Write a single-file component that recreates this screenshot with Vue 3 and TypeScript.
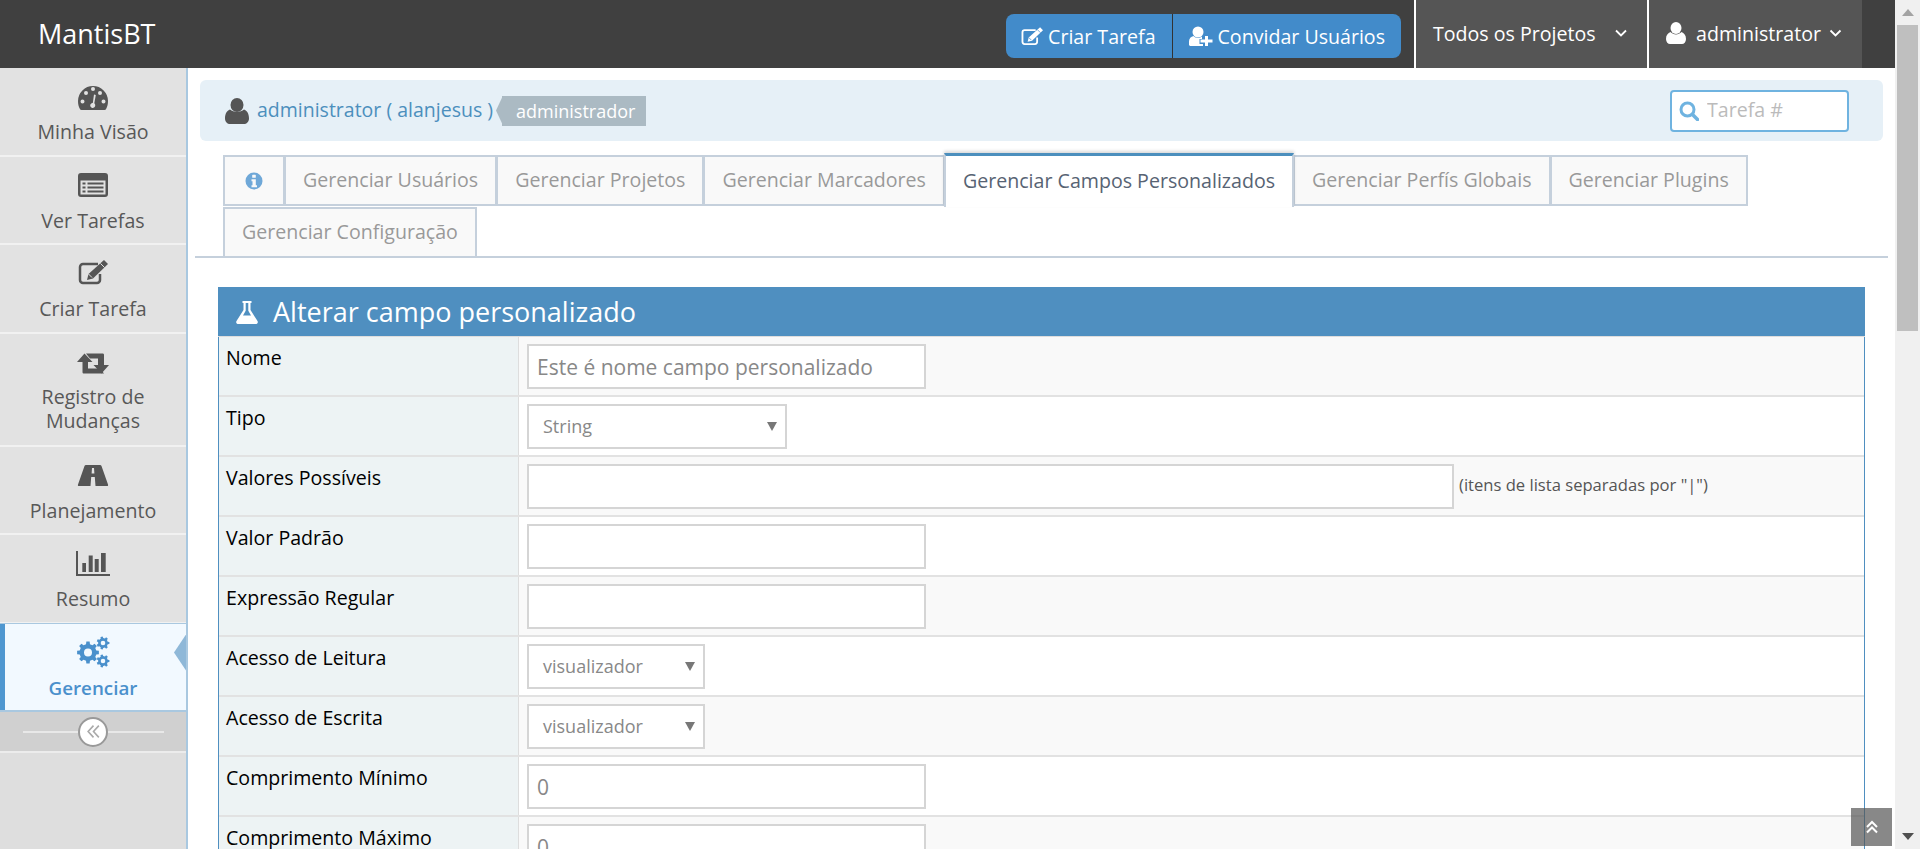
<script setup lang="ts">
interface NavItem { label: string[]; icon: string; active?: boolean }
const nav: NavItem[] = [
  { label: ['Minha Visão'], icon: 'gauge' },
  { label: ['Ver Tarefas'], icon: 'list' },
  { label: ['Criar Tarefa'], icon: 'edit' },
  { label: ['Registro de', 'Mudanças'], icon: 'retweet' },
  { label: ['Planejamento'], icon: 'road' },
  { label: ['Resumo'], icon: 'chart' },
  { label: ['Gerenciar'], icon: 'cogs', active: true },
]
const tabs = [
  'Gerenciar Usuários', 'Gerenciar Projetos', 'Gerenciar Marcadores',
  'Gerenciar Campos Personalizados', 'Gerenciar Perfís Globais',
  'Gerenciar Plugins', 'Gerenciar Configuração',
]
interface Row { label: string; kind: 'input' | 'wide' | 'select'; value?: string; placeholder?: string; width?: string }
const rows: Row[] = [
  { label: 'Nome', kind: 'input', placeholder: 'Este é nome campo personalizado' },
  { label: 'Tipo', kind: 'select', value: 'String', width: '260px' },
  { label: 'Valores Possíveis', kind: 'wide' },
  { label: 'Valor Padrão', kind: 'input' },
  { label: 'Expressão Regular', kind: 'input' },
  { label: 'Acesso de Leitura', kind: 'select', value: 'visualizador', width: '178px' },
  { label: 'Acesso de Escrita', kind: 'select', value: 'visualizador', width: '178px' },
  { label: 'Comprimento Mínimo', kind: 'input', value: '0' },
  { label: 'Comprimento Máximo', kind: 'input', value: '0' },
]

function gear(cx: number, cy: number, R: number, r: number, h: number, n: number): string {
  const w = Math.PI / n
  const pt = (rad: number, a: number) => `${(cx + rad * Math.cos(a)).toFixed(2)} ${(cy + rad * Math.sin(a)).toFixed(2)}`
  let d = ''
  for (let i = 0; i < n; i++) {
    const a = (i * 2 * Math.PI) / n
    d += `${i === 0 ? 'M' : 'L'}${pt(r, a - w * 0.6)}L${pt(R, a - w * 0.38)}L${pt(R, a + w * 0.38)}L${pt(r, a + w * 0.6)}`
  }
  d += `Z M${cx + h} ${cy}a${h} ${h} 0 1 0 ${-2 * h} 0a${h} ${h} 0 1 0 ${2 * h} 0Z`
  return d
}
const cogs = [gear(11, 14.5, 11, 8.5, 4, 8), gear(26, 5, 6.5, 4.9, 2.3, 7), gear(26, 23, 6.5, 4.9, 2.3, 7)].join(' ')
</script>

<template>
  <div class="page">
    <div class="viewport">
      <header class="topbar">
        <div class="brand">MantisBT</div>
        <div class="actions">
          <div class="btn-group">
            <a class="btn">
              <svg viewBox="0 0 30 24" width="22" height="18"><path d="M20 4H5a3 3 0 0 0-3 3v13a3 3 0 0 0 3 3h14a3 3 0 0 0 3-3v-6" fill="none" stroke="#fff" stroke-width="2.500"/><path d="M26 0l4 4-15 14.500-6 1.500 1.500-6z" fill="#fff"/><path d="M22.500 3.500l4 4M10.500 14l3.500 3.500" stroke="#428bca" stroke-width="1"/></svg>
              Criar Tarefa
            </a>
            <a class="btn">
              <svg viewBox="0 0 24 20" width="24" height="20"><circle cx="9" cy="6" r="5.500" fill="#fff"/><path d="M0 19v-3.500C0 12.500 2 10.500 4.500 10c1 1 2.700 2 4.500 2s3-.6 4-1.500V13h-2.500v5H14v2H1z" fill="#fff"/><path d="M16 10h3v3.500h4.500v3H19V20h-3v-3.500h-4.500v-3H16z" fill="#fff"/></svg>
              Convidar Usuários
            </a>
          </div>
          <a class="dropdown projects">
            <span>Todos os Projetos</span>
            <svg class="chev" viewBox="0 0 12 8" width="12" height="8"><path d="M1 1.500l5 5 5-5" fill="none" stroke="#fff" stroke-width="1.800"/></svg>
          </a>
          <a class="dropdown user">
            <svg viewBox="0 0 20 22" width="20" height="22"><ellipse cx="10" cy="6" rx="5.500" ry="6" fill="#fff"/><path d="M0 17c0-4 2-6 4.500-7 1.500 1.500 3.500 2.500 5.500 2.500s4-1 5.500-2.500C18 11 20 13 20 17c0 3-2 5-4 5H4c-2 0-4-2-4-5z" fill="#fff"/></svg>
            <span>administrator</span>
            <svg class="chev" viewBox="0 0 12 8" width="13" height="8"><path d="M1 1.500l5 5 5-5" fill="none" stroke="#fff" stroke-width="1.800"/></svg>
          </a>
        </div>
      </header>

      <div class="body">
        <aside class="sidebar">
          <nav class="nav">
            <a v-for="item in nav" :key="item.icon" class="nav-item" :class="{ active: item.active, tall: item.label.length > 1 }">
              <svg class="nav-icon" viewBox="0 0 32 32" width="32" height="32" aria-hidden="true">
                <g v-if="item.icon === 'gauge'" transform="translate(1 4)">
                  <path fill-rule="evenodd" d="M15 0A15 15 0 0 0 0 15c0 3 .6 5.500 1.800 7.800.4.800.9 1.200 1.700 1.200h23c.8 0 1.300-.4 1.700-1.200C29.400 20.500 30 18 30 15A15 15 0 0 0 15 0zM13 3a2 2 0 1 0 4 0 2 2 0 1 0-4 0zM6 7a2 2 0 1 0 4 0 2 2 0 1 0-4 0zM20 7a2 2 0 1 0 4 0 2 2 0 1 0-4 0zM2.500 15.500a2 2 0 1 0 4 0 2 2 0 1 0-4 0zM23.500 15.500a2 2 0 1 0 4 0 2 2 0 1 0-4 0zM16 8.500l1.800.5-1.500 8.300c1 .8 1.200 2 .7 3.200-.6 1.200-2 1.800-3.300 1.200-1.300-.6-1.800-2-1.300-3.200.4-1 1.400-1.600 2.400-1.600z" fill="#555"/>
                </g>
                <g v-else-if="item.icon === 'list'" transform="translate(1 2)">
                  <path fill-rule="evenodd" d="M3 0h24a3 3 0 0 1 3 3v18a3 3 0 0 1-3 3H3a3 3 0 0 1-3-3V3a3 3 0 0 1 3-3zM2.500 7.500V21.500h25V7.500zM4.500 9.500h3v2h-3zM9.500 9.500h16v2h-16zM4.500 13.500h3v2h-3zM9.500 13.500h16v2h-16zM4.500 17.500h3v2h-3zM9.500 17.500h16v2h-16z" fill="#555"/>
                </g>
                <g v-else-if="item.icon === 'edit'" transform="translate(1 1)">
                  <path d="M20 4H5a3 3 0 0 0-3 3v13a3 3 0 0 0 3 3h14a3 3 0 0 0 3-3v-6" fill="none" stroke="#555" stroke-width="2.500"/>
                  <path d="M26 0l4 4-15 14.500-6 1.500 1.500-6z" fill="#555"/>
                  <path d="M22.500 3.500l4 4M10.500 14l3.500 3.500" stroke="#e2e2e2" stroke-width="1"/>
                </g>
                <g v-else-if="item.icon === 'retweet'" transform="translate(0 6.500)">
                  <path d="M7.500 0l8 8.500H11V15h12l4 5H7c-1 0-1.500-.5-1.500-1.500v-10H0z" fill="#555"/>
                  <path d="M9 0h16.500c1 0 1.500.5 1.500 1.500v10h5L24.500 20l-8-8.500H21V5H13z" fill="#555"/>
                </g>
                <g v-else-if="item.icon === 'road'" transform="translate(1 4)">
                  <path fill-rule="evenodd" d="M8 0h14c.8 0 1.300.3 1.500 1L30 19.500c.3 1 0 1.500-1 1.500H1c-1 0-1.300-.5-1-1.500L6.500 1C6.700.3 7.200 0 8 0zM14 3l-.4 5.500h2.800L16 3zM13.200 12L12.500 21h5L16.800 12z" fill="#555"/>
                </g>
                <g v-else-if="item.icon === 'chart'" transform="translate(-1 2)">
                  <path d="M0 0h2v23h32v2H0zM6.300 12H10v9H6.300zM12.700 4.500h4V21h-4zM18.700 8h4v13h-4zM25 2h4.700v19H25z" fill="#555"/>
                </g>
                <path v-else :d="cogs" fill="#4a90cc" fill-rule="evenodd"/>
              </svg>
              <span class="nav-label"><span v-for="l in item.label" :key="l" class="nav-line">{{ l }}</span></span>
              <i v-if="item.active" class="nav-arrow"></i>
            </a>
          </nav>
          <div class="collapse">
            <span class="collapse-btn">
              <svg viewBox="0 0 14 14" width="15" height="15"><path d="M7 1.500L2 7l5 5.500M12 1.500L7 7l5 5.500" fill="none" stroke="#aaa" stroke-width="1.500"/></svg>
            </span>
          </div>
        </aside>

        <main class="main">
          <div class="crumbs">
            <div class="who">
              <svg viewBox="0 0 24 26" width="24" height="26"><ellipse cx="12" cy="7" rx="6.500" ry="7" fill="#555"/><path d="M0 20.500c0-5 2-8 5-9 1.700 1.500 4.500 2.500 7 2.500s5.300-1 7-2.500c3 1 5 4 5 9 0 3.500-2.500 5.500-5 5.500H5c-2.500 0-5-2-5-5.500z" fill="#555"/></svg>
              <a class="who-link">administrator ( alanjesus )</a>
              <span class="role">administrador</span>
            </div>
            <label class="search">
              <svg viewBox="0 0 20 20" width="20" height="20"><circle cx="8.500" cy="8.500" r="6.500" fill="none" stroke="#6fb3e0" stroke-width="3"/><path d="M13.500 13.500l5 5" stroke="#6fb3e0" stroke-width="3.500" stroke-linecap="round"/></svg>
              <input class="search-input" type="text" placeholder="Tarefa #" />
            </label>
          </div>

          <div class="tabs-wrap">
            <ul class="tabs">
              <li class="tab info">
                <svg viewBox="0 0 18 18" width="18" height="18"><circle cx="9" cy="9" r="8.500" fill="#6fa8d8"/><rect x="7.200" y="2.800" width="3.600" height="3" rx=".6" fill="#f9f9f9"/><path d="M6.500 7.200h4.300v6h1.200v2H6.500v-2h1v-4h-1z" fill="#f9f9f9"/></svg>
              </li>
              <li v-for="(t, i) in tabs" :key="t" class="tab" :class="{ current: i === 3 }">{{ t }}</li>
            </ul>
          </div>

          <section class="panel">
            <h2 class="panel-head">
              <svg viewBox="0 0 24 24" width="24" height="24"><path d="M7.500 1h9v2h-1v7l7 11c.8 1.500 0 3-2 3h-17c-2 0-2.800-1.500-2-3l7-11V3h-1zM10.700 3v7.800L8 15.500h8l-2.700-4.700V3z" fill="#fff" fill-rule="evenodd"/></svg>
              Alterar campo personalizado
            </h2>
            <div class="table">
              <div v-for="r in rows" :key="r.label" class="row">
                <div class="cell-label">{{ r.label }}</div>
                <div class="cell-value">
                  <template v-if="r.kind === 'select'">
                    <div class="select" :style="{ width: r.width }">
                      <span>{{ r.value }}</span>
                      <i class="caret"></i>
                    </div>
                  </template>
                  <template v-else>
                    <input class="field" :class="{ wide: r.kind === 'wide' }" type="text" :placeholder="r.placeholder" :value="r.value" />
                    <span v-if="r.kind === 'wide'" class="note">(itens de lista separadas por "|")</span>
                  </template>
                </div>
              </div>
            </div>
          </section>
        </main>
      </div>

      <a class="to-top">
        <svg viewBox="0 0 14 14" width="14" height="14"><path d="M2 7l5-5 5 5M2 12.500l5-5 5 5" fill="none" stroke="#fff" stroke-width="2"/></svg>
      </a>
    </div>

    <div class="scrollbar">
      <div class="sb-btn"><i class="sb-up"></i></div>
      <div class="sb-track"><div class="sb-thumb"></div></div>
      <div class="sb-btn"><i class="sb-down"></i></div>
    </div>
  </div>
</template>

<style>
html, body { margin: 0; height: 100%; overflow: hidden; }
</style>

<style scoped>
* { box-sizing: border-box; }
.page { display: flex; width: 1920px; height: 849px; overflow: hidden; font-family: "Open Sans", sans-serif; font-size: 19.600px; background: #fff; }
.viewport { position: relative; width: 1895px; height: 849px; display: flex; flex-direction: column; overflow: hidden; }

.topbar { height: 68px; flex: none; background: #404040; display: flex; justify-content: space-between; color: #fff; }
.brand { font-size: 27px; line-height: 68px; padding-left: 38px; }
.actions { display: flex; padding-right: 33px; }
.btn-group { display: flex; height: 44px; margin-top: 14px; background: #428bca; border-radius: 8px; margin-right: 13px; }
.btn { display: flex; align-items: center; gap: 5px; padding: 0 16px; color: #fff; }
.btn:first-child { padding-left: 15px; }
.btn + .btn { border-left: 1px solid #333; }
.dropdown { display: flex; align-items: center; height: 68px; background: #555; border-left: 2px solid #fff; color: #fff; padding-bottom: 2px; }
.projects { width: 233px; padding-left: 17px; }
.projects .chev { margin-left: 19px; }
.user { width: 215px; padding-left: 17px; }
.user span { margin-left: 10px; }
.user .chev { margin-left: 8px; }

.body { flex: 1; display: flex; min-height: 0; }
.sidebar { width: 188px; flex: none; background: #dedede; border-right: 2px solid #a9c8e0; display: flex; flex-direction: column; }
.nav { display: flex; flex-direction: column; }
.nav-item { position: relative; height: 88.500px; display: flex; flex-direction: column; align-items: center; background: #e2e2e2; border-bottom: 2px solid #f1f1f1; color: #585858; padding-top: 14px; }
.nav-item.tall { height: 113px; padding-top: 13px; }
.nav-icon { flex: none; overflow: visible; }
.nav-label { display: flex; flex-direction: column; align-items: center; line-height: 24px; margin-top: 6px; }
.nav-line { display: block; }
.nav-item.active { background: #f2f9ff; border-top: 1px solid #a9c8e0; border-bottom: 2px solid #a9c8e0; box-shadow: inset 5px 0 0 #4f97d0; color: #4a90cc; font-weight: 600; font-size: 18.800px; margin-top: -1px; height: 89.500px; }
.nav-arrow { position: absolute; right: 0; top: 11px; width: 12px; height: 36px; background: #8fb8d8; clip-path: polygon(100% 0, 100% 100%, 0 50%); }
.collapse { position: relative; height: 39px; background: #d0d0d0; border-bottom: 2px solid #ececec; display: flex; align-items: center; justify-content: center; box-sizing: content-box; }
.collapse::before { content: ""; position: absolute; left: 23px; width: 141px; top: 19px; height: 2px; background: #e8e8e8; }
.collapse-btn { position: relative; width: 30px; height: 30px; background: #fff; border: 2px solid #999; border-radius: 50%; display: flex; align-items: center; justify-content: center; }

.main { flex: 1; min-width: 0; padding: 12px 12px 0 12px; }
.crumbs { height: 61px; background: #e6f0f7; border-radius: 6px; display: flex; align-items: center; justify-content: space-between; padding: 0 34px 0 25px; }
.who { display: flex; align-items: center; }
.who-link { color: #4c8fbd; margin-left: 8px; padding-bottom: 2px; font-size: 19.500px; }
.role { position: relative; margin-left: 9px; height: 30px; line-height: 30px; background: #abbac3; color: #fff; font-size: 18px; padding: 0 11px 0 14px; }
.role::before { content: ""; position: absolute; left: -6px; top: 0; width: 7px; height: 30px; background: #abbac3; clip-path: polygon(100% 0, 100% 100%, 0 50%); }
.search { display: flex; align-items: center; width: 179px; height: 42px; background: #fff; border: 2px solid #6fb3e0; border-radius: 4px; padding-left: 7px; }
.search-input { border: 0; outline: 0; background: transparent; width: 130px; margin-left: 8px; padding: 0 0 2px; font: inherit; color: #888; }
.search-input::placeholder { color: #bbb; opacity: 1; }

.tabs-wrap { margin: 14px -5px 0 -5px; padding: 0 0 0 28px; border-bottom: 2px solid #c5d0dc; height: 103px; }
.tabs { list-style: none; margin: 0; padding: 0; display: flex; flex-wrap: wrap; }
.tab { height: 51px; line-height: 45px; border: 2px solid #c5d0dc; background: #f9f9f9; color: #999; padding: 0 17px; margin-right: -1px; white-space: nowrap; }
.tab.info { width: 62px; padding: 0; display: flex; align-items: center; justify-content: center; }
.tab.current { position: relative; z-index: 1; margin-top: -2px; height: 54px; line-height: 49px; background: #fff; color: #576373; border-color: #c5d0dc; border-top: 3px solid #4c8fbd; border-bottom: 0; box-shadow: 0 -2px 3px rgba(0,0,0,.15); }

.panel { margin: 29px 18px 0 18px; }
.panel-head { margin: 0; height: 50px; background: #4f8fc0; color: #fff; font-weight: 400; font-size: 27px; display: flex; align-items: center; gap: 14px; padding-left: 17px; border-bottom: 1px solid #ddd; }
.table { border: solid #4f8fc0; border-width: 0 1px; }
.row { display: flex; height: 60px; border-bottom: 2px solid #e2e2e2; }
.row:nth-child(odd) { background: #f9f9f9; }
.row:nth-child(even) { background: #fff; }
.cell-label { width: 300px; flex: none; background: #edf3f4; color: #000; padding: 9px 0 0 7px; line-height: 24px; border-right: 1px solid #ddd; }
.cell-value { flex: 1; display: flex; align-items: flex-start; padding: 7px 0 0 8px; }
.field { width: 399px; height: 45px; background: #fff; border: 2px solid #d5d5d5; padding: 0 8px; font: inherit; font-size: 21px; color: #888; outline: 0; }
.field::placeholder { color: #888; opacity: 1; }
.field.wide { width: 927px; }
.note { margin: 6px 0 0 5px; font-size: 16.600px; color: #555; line-height: 30px; }
.select { position: relative; height: 45px; background: #fff; border: 2px solid #d5d5d5; padding: 0 0 0 14px; font-size: 18px; color: #888; line-height: 40px; }
.caret { position: absolute; right: 8px; top: 16px; width: 10px; height: 9px; background: #777; clip-path: polygon(0 0, 100% 0, 50% 100%); }

.to-top { position: absolute; left: 1851px; top: 808px; width: 41px; height: 38px; background: rgba(85,85,85,.7); display: flex; align-items: center; justify-content: center; }

.scrollbar { width: 25px; flex: none; height: 849px; background: #f0f0f0; display: flex; flex-direction: column; }
.sb-btn { height: 25px; flex: none; display: flex; align-items: center; justify-content: center; }
.sb-up { width: 0; height: 0; border: 6px solid transparent; border-top: 0; border-bottom: 7px solid #a3a3a3; }
.sb-down { width: 0; height: 0; border: 6px solid transparent; border-bottom: 0; border-top: 7px solid #505050; }
.sb-track { flex: 1; }
.sb-thumb { height: 306px; margin: 0 2px; background: #bfbfbf; }
</style>
